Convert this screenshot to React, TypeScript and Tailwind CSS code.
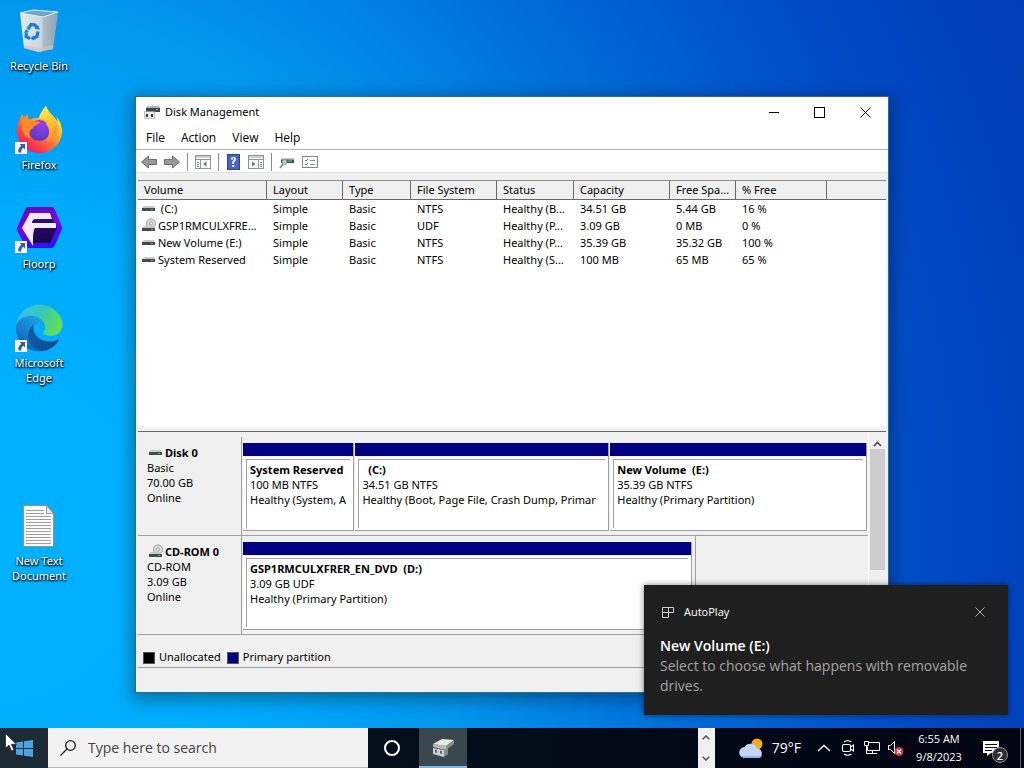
import React from 'react';

interface Volume {
    name: string;
    kind: 'disk' | 'cd';
    layout: string;
    type: string;
    fileSystem: string;
    status: string;
    capacity: string;
    free: string;
    percent: string;
}

const volumes: Volume[] = [
    { name: ' (C:)', kind: 'disk', layout: 'Simple', type: 'Basic', fileSystem: 'NTFS', status: 'Healthy (B...', capacity: '34.51 GB', free: '5.44 GB', percent: '16 %' },
    { name: 'GSP1RMCULXFRE...', kind: 'cd', layout: 'Simple', type: 'Basic', fileSystem: 'UDF', status: 'Healthy (P...', capacity: '3.09 GB', free: '0 MB', percent: '0 %' },
    { name: 'New Volume (E:)', kind: 'disk', layout: 'Simple', type: 'Basic', fileSystem: 'NTFS', status: 'Healthy (P...', capacity: '35.39 GB', free: '35.32 GB', percent: '100 %' },
    { name: 'System Reserved', kind: 'disk', layout: 'Simple', type: 'Basic', fileSystem: 'NTFS', status: 'Healthy (S...', capacity: '100 MB', free: '65 MB', percent: '65 %' },
];

const columns = [
    { label: 'Volume', width: 'w-[129px]' },
    { label: 'Layout', width: 'w-[76px]' },
    { label: 'Type', width: 'w-[68px]' },
    { label: 'File System', width: 'w-[86px]' },
    { label: 'Status', width: 'w-[77px]' },
    { label: 'Capacity', width: 'w-[96px]' },
    { label: 'Free Spa...', width: 'w-[66px]' },
    { label: '% Free', width: 'w-[91px]' },
];

/* ---------- Small drive icons ---------- */

const DriveIcon: React.FC<{ kind: 'disk' | 'cd' }> = ({ kind }) => (
    <svg width="14" height="16" viewBox="0 0 14 16" className="shrink-0">
        {kind === 'cd' && (
            <>
                <circle cx="9" cy="5.5" r="4.6" fill="#dcdcdc" stroke="#9a9a9a" strokeWidth="0.9" />
                <circle cx="9" cy="5.5" r="1.6" fill="#fff" stroke="#8a8a8a" strokeWidth="0.8" />
            </>
        )}
        <g transform={kind === 'cd' ? 'translate(0 3)' : undefined}>
            <path d="M2 5h10l1 2H0z" fill="#c9c9c9" />
            <rect x="0" y="7" width="13" height="3" fill="#454a4a" />
            <rect x="9" y="8" width="2" height="1" fill="#5fae86" />
        </g>
    </svg>
);

const AppIcon = () => (
    <svg width="16" height="16" viewBox="0 0 16 16">
        <path d="M3 2h12l1 2H2z" fill="#b4b4b4" />
        <rect x="2" y="4" width="14" height="4" fill="#3e4343" />
        <rect x="12" y="5" width="2" height="1" fill="#8fd0a8" />
        <path d="M0.500 7.500h10v7h-10z" fill="#ececec" stroke="#999" strokeWidth="0.6" />
        <path d="M2 10h2v3H2zM7 10h2v3H7z" fill="#333" />
    </svg>
);

/* ---------- Desktop shortcuts ---------- */

const RecycleBinIcon = () => (
    <svg width="48" height="48" viewBox="0 0 48 48">
        <defs>
            <linearGradient id="bin" x1="0" x2="1">
                <stop offset="0" stopColor="#dfe8ee" />
                <stop offset="0.58" stopColor="#cbd7e0" />
                <stop offset="0.6" stopColor="#b0bfca" />
                <stop offset="1" stopColor="#8aa2b4" />
            </linearGradient>
        </defs>
        <g transform="translate(-5 0)">
            <path d="M10 6 33 9 48 6 43 42 29 45 14 41z" fill="url(#bin)" />
            <path d="M10 6 23 3 48 5 33 10z" fill="#6fa6c8" stroke="#e4f0f6" strokeWidth="1" />
            <path d="M14 38l15 3v4l-15-4zM29 41l14-3v4l-14 3z" fill="#d7bfb4" opacity="0.7" />
            <g fill="none" stroke="#1c7fd0" strokeWidth="3.2">
                <path d="M18 22.500l3-5 4 .5 2 3" />
                <path d="M28 24.500l-1 5-4 2" />
                <path d="M20 31.500l-4-2 .5-4" />
            </g>
            <path d="M25 22l5 .5-2-4.500zM24 28.500v5l-4-2zM14 26l5-1-3-3z" fill="#1c7fd0" />
        </g>
    </svg>
);

const FirefoxIcon = () => (
    <svg width="48" height="48" viewBox="0 0 48 48">
        <defs>
            <linearGradient id="fxBody" x1="0.85" y1="0.1" x2="0.2" y2="0.95">
                <stop offset="0" stopColor="#fff14a" />
                <stop offset="0.3" stopColor="#ffbd2e" />
                <stop offset="0.58" stopColor="#ff7139" />
                <stop offset="0.82" stopColor="#ff3647" />
                <stop offset="1" stopColor="#e31587" />
            </linearGradient>
            <radialGradient id="fxGlobe" cx="0.6" cy="0.2" r="0.9">
                <stop offset="0" stopColor="#a03ce8" />
                <stop offset="0.6" stopColor="#6a3ed2" />
                <stop offset="1" stopColor="#4a3bb8" />
            </radialGradient>
            <linearGradient id="fxFlame" x1="0.3" y1="0" x2="0.6" y2="1">
                <stop offset="0" stopColor="#fff04c" />
                <stop offset="0.5" stopColor="#ffc42f" />
                <stop offset="1" stopColor="#ff8436" />
            </linearGradient>
        </defs>
        <path d="M31 0c-3 4-6 7-7 12-4-.5-7 .5-9 2-2-1.500-2.500-3.500-2.500-5.500-2 1-3 2.500-4 3.500 0-1.500-.5-2.500-.7-4C4.500 12 2 18 2 25c0 12 10 22 22.500 22S47 37.500 47 25c0-6-2.500-11-6-14.500 1 2 1.500 4 1.500 5.500C39.500 9.500 33 7 31 0z" fill="url(#fxBody)" />
        <circle cx="24.500" cy="24.500" r="10.500" fill="url(#fxGlobe)" />
        <path d="M31 0c-3 4-6 7-7 12 5 0 9 2 10.500 6-1.500-1-3-1-4-.5 5 5 5 13-1 17.500 9 0 14-7 13-16C39.500 9.500 33 7 31 0z" fill="url(#fxFlame)" />
        <path d="M7 13c5-1 9 0 11 2 2 .5 5 .3 7 1-1 2.500-5 3-6.500 5-.5 2-3 2-4 4.500-.5 2 0 5 1.500 7-6-1-11-8-9-19.500z" fill="#ff8b27" />
    </svg>
);

const FloorpIcon = () => (
    <svg width="48" height="48" viewBox="0 0 48 48">
        <defs>
            <linearGradient id="hexEdge" x1="0" y1="0" x2="0.3" y2="1">
                <stop offset="0" stopColor="#5a10a8" />
                <stop offset="0.5" stopColor="#7a06e0" />
                <stop offset="1" stopColor="#2f12ff" />
            </linearGradient>
            <linearGradient id="hexCore" x1="0" y1="0" x2="0" y2="1">
                <stop offset="0" stopColor="#30107a" />
                <stop offset="1" stopColor="#1a0448" />
            </linearGradient>
        </defs>
        <path d="M13 2h24q1.500 0 2.500 2l7.500 18q.5 1 0 2l-7.500 17q-1 2-3 2H13q-2 0-3-2L2 25q-.5-1 0-2L10.500 4Q11.500 2 13 2z" fill="url(#hexEdge)" />
        <path d="M15 8h20l7 15-7 15H16L8 23z" fill="url(#hexCore)" />
        <path d="M15 8h20l2 6H21c-2.500 0-4 1.500-4 4h24v5H20c-2 2-2 9-2 18L7 23z" fill="#f3e9ff" />
    </svg>
);

const EdgeIcon = () => (
    <svg width="48" height="48" viewBox="0 0 264 264">
        <defs>
            <linearGradient id="edA" x1="0.2" y1="0.5" x2="1" y2="0.7">
                <stop offset="0" stopColor="#0c59a4" />
                <stop offset="1" stopColor="#114a8b" />
            </linearGradient>
            <linearGradient id="edB" x1="0.8" y1="0.2" x2="0.3" y2="1">
                <stop offset="0" stopColor="#1b9de2" />
                <stop offset="0.5" stopColor="#1680ce" />
                <stop offset="1" stopColor="#0b5fae" />
            </linearGradient>
            <linearGradient id="edC" x1="0" y1="0.3" x2="1" y2="0.6">
                <stop offset="0" stopColor="#35c1f1" />
                <stop offset="0.5" stopColor="#36c8b8" />
                <stop offset="1" stopColor="#66e04b" />
            </linearGradient>
        </defs>
        <path fill="url(#edA)" d="M235.680 195.460a93.730 93.730 0 0 1-10.540 4.710 101.870 101.870 0 0 1-35.900 6.460c-47.320 0-88.540-32.550-88.540-74.320A31.480 31.480 0 0 1 117.130 105c-42.800 1.800-53.800 46.400-53.800 72.530 0 73.880 68.090 81.370 82.760 81.370 7.910 0 19.840-2.300 27-4.560l1.310-.44a128.340 128.340 0 0 0 66.600-52.800 4 4 0 0 0-5.320-5.640Z" />
        <path fill="url(#edB)" d="M110.340 246.340A79.200 79.200 0 0 1 87.600 225a80.720 80.720 0 0 1 29.530-120c3.120-1.470 8.450-4.130 15.540-4a32.350 32.350 0 0 1 25.690 13 31.880 31.880 0 0 1 6.360 18.660c0-.21 24.460-79.600-80-79.600-43.900 0-80 41.660-80 78.210a130.150 130.150 0 0 0 12.110 56 128 128 0 0 0 156.380 67.110 75.550 75.550 0 0 1-62.780-8Z" />
        <path fill="url(#edC)" d="M156.940 153.780c-.81 1.050-3.300 2.500-3.300 5.660 0 2.610 1.700 5.120 4.720 7.230 14.380 10 41.490 8.680 41.560 8.680a59.560 59.560 0 0 0 30.270-8.350 61.380 61.380 0 0 0 30.430-52.880c.26-22.410-8-37.310-11.340-43.910C228 29.160 182.600 4.700 133.240 4.700a128 128 0 0 0-128 126.200c.48-36.540 36.800-66.050 80-66.050 3.500 0 23.460.34 42 10.070 16.340 8.580 24.900 18.940 30.850 29.210 6.180 10.670 7.280 24.150 7.280 29.520 0 5.370-2.740 13.330-8.430 20.130Z" />
    </svg>
);

const TextFileIcon = () => (
    <svg width="48" height="48" viewBox="0 0 48 48">
        <path d="M8.500 3.500h23l7 8v33h-30z" fill="#fbfbfb" stroke="#9a8f88" strokeWidth="1" />
        <path d="M31.500 3.500v8h7z" fill="#e8e8e8" stroke="#8d8d8d" strokeWidth="0.8" />
        <path d="M11 8.500h18M11 11.500h18M11 14.500h25M11 17.500h25M11 20.500h25M11 23.500h25M11 26.500h25M11 29.500h25M11 32.500h25M11 35.500h25M11 38.500h25M11 41.500h25" stroke="#a0a0a0" strokeWidth="1" />
    </svg>
);

const ShortcutArrow = () => (
    <svg width="12" height="12" viewBox="0 0 12 12" className="absolute bottom-0 left-0">
        <rect width="12" height="12" fill="#f6f6f6" />
        <path d="M4.500 2H10v5.500L8.200 5.700C6.500 7 6 8.500 6.300 10.500H3.500C2.800 8 4 5.500 6.300 3.800z" fill="#2f5f9e" />
    </svg>
);

interface ShortcutProps {
    label: string;
    icon: React.ReactNode;
    linked?: boolean;
    className?: string;
}

const Shortcut: React.FC<ShortcutProps> = ({ label, icon, linked, className = '' }) => (
    <button className={`flex flex-col items-center gap-[3px] px-2 pt-[7px] ${className}`}>
        <span className="relative">
            {icon}
            {linked && <ShortcutArrow />}
        </span>
        <span className="text-[11px] leading-[15px] text-white [text-shadow:1px_1px_2px_#000,0_1px_2px_#000]">{label}</span>
    </button>
);

/* ---------- Toolbar ---------- */

const ArrowGlyph = ({ flip }: { flip?: boolean }) => (
    <svg width="16" height="16" viewBox="0 0 16 16" className={flip ? 'rotate-180' : ''}>
        <path d="M.5 8l7-6v3.500h8v5h-8V14z" fill="#989898" stroke="#6b6b6b" strokeWidth="1" />
    </svg>
);

const PaneGlyph = ({ right }: { right?: boolean }) => (
    <svg width="16" height="16" viewBox="0 0 16 16">
        <rect x="0.5" y="1.500" width="15" height="13" fill="#fff" stroke="#8b9399" />
        <path d="M1 2h14v2H1z" fill="#c9d1d6" />
        <path d="M1 5.500h14" stroke="#8b9399" />
        {right ? (
            <>
                <path d="M10.500 6v8" stroke="#8b9399" />
                <path d="M12 8.500h2M12 10.500h2M12 12.500h2" stroke="#6d7a82" />
                <path d="M4 7.500v5l3.500-2.500z" fill="#5b7f5f" />
            </>
        ) : (
            <>
                <path d="M5.500 6v8" stroke="#8b9399" />
                <path d="M2 8.500h2M2 10.500h2M2 12.500h2" stroke="#6d7a82" />
                <path d="M11.500 7.500v5L8 10z" fill="#5b7f5f" />
            </>
        )}
    </svg>
);

const HelpGlyph = () => (
    <span className="flex h-4 w-[13px] items-center justify-center border border-[#2f429a] bg-[#4a62c4] font-serif text-[13px] leading-none font-bold text-white">?</span>
);

const RescanGlyph = () => (
    <svg width="16" height="16" viewBox="0 0 16 16">
        <path d="M3 4h12v1.500H2z" fill="#c8c8c8" />
        <rect x="2" y="5.500" width="13" height="3.500" fill="#4c5353" />
        <path d="M9 7h4" stroke="#4fc08d" strokeWidth="1.200" />
        <circle cx="5.500" cy="8" r="2.500" fill="#a9d7cf" stroke="#7d8a8a" strokeWidth="0.8" />
        <path d="M4 10l-3 4" stroke="#8a8a8a" strokeWidth="1.800" />
    </svg>
);

const ListGlyph = () => (
    <svg width="16" height="16" viewBox="0 0 16 16">
        <rect x="0.5" y="2.500" width="15" height="11" fill="#fff" stroke="#7c8a96" />
        <path d="M3 6l1 1 2-2M3 10l1 1 2-2" stroke="#4678a8" fill="none" />
        <path d="M8 6.500h5M8 10.500h5" stroke="#8a949c" />
    </svg>
);

const ToolButton: React.FC<{ label: string; children: React.ReactNode }> = ({ label, children }) => (
    <button aria-label={label} className="flex h-5 items-center">{children}</button>
);

const Divider = () => <span className="h-[18px] w-px bg-[#8c8c8c]" />;

/* ---------- Disk graph ---------- */

interface PartitionProps {
    title: string;
    size: string;
    status: string;
    grow: string;
}

const Partition: React.FC<PartitionProps> = ({ title, size, status, grow }) => (
    <div className={`flex min-w-0 flex-col border-r border-b border-[#a0a0a0] ${grow}`}>
        <div className="h-[13px] bg-[#000080]" />
        <div className="mt-px flex-1 bg-white">
            <div className="mx-[3px] mt-[2px] h-[69px] border-t border-l border-[#a0a0a0] pr-[3px]">
                <div className="overflow-hidden pt-[2px] pl-[3px] text-[11px] leading-[15px] whitespace-pre">
                    <p className="font-bold">{title}</p>
                    <p>{size}</p>
                    <p>{status}</p>
                </div>
            </div>
        </div>
    </div>
);

interface DiskRowProps {
    name: string;
    kind: 'disk' | 'cd';
    lines: string[];
    children: React.ReactNode;
}

const DiskRow: React.FC<DiskRowProps> = ({ name, kind, lines, children }) => (
    <section className="flex h-[99px] border-b border-[#a0a0a0]">
        <div className="w-[104px] shrink-0 border-r border-[#a0a0a0] pt-2 pl-[9px] text-[11px] leading-[15px]">
            <h2 className="flex h-[15px] items-center gap-[2px] font-bold whitespace-nowrap">
                <span className="pl-[2px]"><DriveIcon kind={kind} /></span>
                {name}
            </h2>
            {lines.map((line) => <p key={line}>{line}</p>)}
        </div>
        <div className="flex min-w-0 flex-1">{children}</div>
    </section>
);

const DiskManagement = () => (
    <main className="absolute top-[97px] right-[136px] bottom-[76px] left-[136px] flex flex-col bg-white text-[11px] text-black shadow-[0_0_0_1px_#2d6a94,0_4px_16px_4px_rgba(0,0,0,0.35)]">
        <header className="flex h-[30px] items-center pl-2">
            <AppIcon />
            <h1 className="flex-1 pl-[5px]">Disk Management</h1>
            <button aria-label="Minimize" className="flex h-[30px] w-[45px] items-center justify-center">
                <span className="h-px w-[10px] bg-black" />
            </button>
            <button aria-label="Maximize" className="flex h-[30px] w-[46px] items-center justify-center">
                <span className="size-[11px] border border-black" />
            </button>
            <button aria-label="Close" className="flex h-[30px] w-[46px] items-center justify-center">
                <svg width="11" height="11" viewBox="0 0 11 11"><path d="M.5.5l10 10M10.500.5l-10 10" stroke="#000" /></svg>
            </button>
        </header>

        <nav className="flex h-[23px] items-center gap-4 border-b border-[#b4b4b4] pl-[10px] text-xs font-['Open_Sans','Noto_Sans',sans-serif]">
            <button>File</button>
            <button>Action</button>
            <button>View</button>
            <button>Help</button>
        </nav>

        <div className="flex h-[23px] items-center gap-[7px] border-b border-[#e2e2e2] pt-[2px] pl-[5px]">
            <ToolButton label="Back"><ArrowGlyph /></ToolButton>
            <ToolButton label="Forward"><ArrowGlyph flip /></ToolButton>
            <Divider />
            <ToolButton label="Show console tree"><PaneGlyph /></ToolButton>
            <Divider />
            <span className="px-px"><ToolButton label="Help"><HelpGlyph /></ToolButton></span>
            <ToolButton label="Show action pane"><PaneGlyph right /></ToolButton>
            <Divider />
            <ToolButton label="Rescan disks"><RescanGlyph /></ToolButton>
            <ToolButton label="Settings"><ListGlyph /></ToolButton>
        </div>

        <div className="flex min-h-0 flex-1 flex-col bg-[#f0f0f0] px-[2px] pt-[7px]">
            <div className="min-h-0 flex-1 border-b-4 border-[#f0f0f0] bg-white">
                <table className="w-full table-fixed border-separate border-spacing-0 text-left">
                    <thead>
                        <tr className="h-5 bg-[#f0f0f0]">
                            {columns.map((col) => (
                                <th key={col.label} className={`border-t border-r border-b border-t-[#8c8c8c] border-r-[#696969] border-b-[#696969] px-[6px] font-normal whitespace-nowrap ${col.width}`}>
                                    {col.label}
                                </th>
                            ))}
                            <th className="border-t border-b border-t-[#8c8c8c] border-b-[#696969]" />
                        </tr>
                    </thead>
                    <tbody>
                        {volumes.map((volume) => (
                            <tr key={volume.name} className="h-[17px] leading-[17px] whitespace-nowrap">
                                <td className="pl-1">
                                    <span className="flex items-center gap-[2px] whitespace-pre">
                                        <DriveIcon kind={volume.kind} />
                                        {volume.name}
                                    </span>
                                </td>
                                <td className="pl-[6px]">{volume.layout}</td>
                                <td className="pl-[6px]">{volume.type}</td>
                                <td className="pl-[6px]">{volume.fileSystem}</td>
                                <td className="pl-[6px]">{volume.status}</td>
                                <td className="pl-[6px]">{volume.capacity}</td>
                                <td className="pl-[6px]">{volume.free}</td>
                                <td className="pl-[6px]">{volume.percent}</td>
                                <td />
                            </tr>
                        ))}
                    </tbody>
                </table>
            </div>

            <div className="flex h-[217px] border-t border-[#696969]">
                <div className="flex min-w-0 flex-1 flex-col pt-[5px]">
                    <DiskRow name="Disk 0" kind="disk" lines={['Basic', '70.00 GB', 'Online']}>
                        <div className="flex min-w-0 flex-1 gap-px pt-[6px] pr-px pb-1 pl-px">
                            <Partition title="System Reserved" size="100 MB NTFS" status="Healthy (System, A" grow="flex-[111]" />
                            <Partition title="  (C:)" size="34.51 GB NTFS" status="Healthy (Boot, Page File, Crash Dump, Primar" grow="flex-[254]" />
                            <Partition title="New Volume  (E:)" size="35.39 GB NTFS" status="Healthy (Primary Partition)" grow="flex-[257]" />
                        </div>
                    </DiskRow>
                    <DiskRow name="CD-ROM 0" kind="cd" lines={['CD-ROM', '3.09 GB', 'Online']}>
                        <div className="flex min-w-0 flex-[453] border-r border-[#a0a0a0] pt-[6px] pr-[3px] pb-1 pl-px">
                            <Partition title="GSP1RMCULXFRER_EN_DVD  (D:)" size="3.09 GB UDF" status="Healthy (Primary Partition)" grow="flex-1" />
                        </div>
                        <div className="flex-[173]" />
                    </DiskRow>
                </div>
                <div className="flex w-[18px] flex-col items-center border-l border-white pt-[6px]">
                    <button aria-label="Scroll up" className="flex h-[11px] items-center">
                        <svg width="9" height="6" viewBox="0 0 9 6"><path d="M1 5l3.500-3.500L8 5" fill="none" stroke="#505050" strokeWidth="1.600" /></svg>
                    </button>
                    <div className="h-[121px] w-[15px] bg-[#cdcdcd]" />
                </div>
            </div>

            <div className="flex h-5 items-center border-b border-[#a0a0a0] pl-[5px]">
                <span className="size-3 border border-[#555] bg-black" />
                <span className="pl-1">Unallocated</span>
                <span className="ml-[6px] size-3 border border-[#555] bg-[#000080]" />
                <span className="pl-1">Primary partition</span>
            </div>
            <footer className="h-6" />
        </div>
    </main>
);

/* ---------- AutoPlay toast ---------- */

const Toast = () => (
    <aside className="absolute right-4 bottom-[53px] w-[364px] bg-[#1f1f1f] px-4 pt-[17px] pb-[19px] font-['Open_Sans','Noto_Sans',sans-serif] text-white shadow-[0_0_6px_rgba(0,0,0,0.5)]">
        <div className="flex h-5 items-center">
            <svg width="16" height="14" viewBox="0 0 16 14" fill="none" stroke="#d0d0d0">
                <path d="M2.500 2.500h11v5h-11zM8.500 2.500v10h-6V7.500" />
            </svg>
            <span className="flex-1 pl-2 text-[11px]">AutoPlay</span>
            <button aria-label="Dismiss" className="px-[7px]">
                <svg width="10" height="10" viewBox="0 0 10 10"><path d="M.5.5l9 9M9.500.5l-9 9" stroke="#a8a8a8" /></svg>
            </button>
        </div>
        <p className="pt-[14px] text-sm leading-5 font-semibold">New Volume (E:)</p>
        <p className="text-sm leading-5 text-[#a5a5a5]">Select to choose what happens with removable drives.</p>
    </aside>
);

/* ---------- Taskbar ---------- */

const Taskbar = () => (
    <footer className="flex h-10 shrink-0 bg-linear-to-r from-[#02141f] to-[#020512] font-['Open_Sans','Noto_Sans',sans-serif] text-white">
        <button aria-label="Start" className="flex w-12 items-center justify-center bg-[#1c2b34]">
            <svg width="17" height="17" viewBox="0 0 17 17" fill="#4ba3e3">
                <path d="M0 2.500l7-1v6.500H0zM8 1.300L17 0v8H8zM0 9h7v6.500l-7-1zM8 9h9v8l-9-1.300z" />
            </svg>
        </button>
        <label className="flex w-80 items-center gap-3 border-b border-[#b8b8b8] bg-[#f2f2f2] pl-3">
            <svg width="16" height="16" viewBox="0 0 16 16" fill="none" stroke="#1c1c1c" strokeWidth="1.300">
                <circle cx="10.500" cy="5.500" r="4.800" />
                <path d="M7 9l-6.500 6.500" />
            </svg>
            <input type="text" aria-label="Search" placeholder="Type here to search" className="min-w-0 flex-1 bg-transparent text-sm text-black outline-none placeholder:text-[#424242]" />
        </label>
        <button aria-label="Cortana" className="flex w-12 items-center justify-center">
            <span className="size-4 rounded-full border-2 border-white" />
        </button>
        <button aria-label="Disk Management" className="ml-[3px] flex w-12 items-center justify-center border-b-2 border-[#76b9ed] bg-[#3b474e]">
            <svg width="24" height="24" viewBox="0 0 24 24">
                <path d="M2 9l9-5 12 1-8 6z" fill="#e9e9e9" />
                <path d="M15 11l8-6v4l-8 6z" fill="#8d8d8d" />
                <path d="M2 9l13 2v4L2 12z" fill="#b9b9b9" />
                <path d="M2 13l11 2v7L2 19z" fill="#cfcfcf" />
                <path d="M13 15l4-2v6l-4 3z" fill="#8b8b8b" />
                <path d="M4 14.500l2 .5v3l-2-.5zM9 15.500l2 .5v3l-2-.5z" fill="#666" />
            </svg>
        </button>

        <div className="flex-1" />

        <div className="flex w-[17px] flex-col items-center justify-between bg-[#f0f0f0] py-[7px]">
            <button aria-label="Scroll up" className="flex"><svg width="8" height="5" viewBox="0 0 8 5"><path d="M.7 4.300L4 1l3.300 3.300" fill="none" stroke="#555" strokeWidth="1.500" /></svg></button>
            <button aria-label="Scroll down" className="flex"><svg width="8" height="5" viewBox="0 0 8 5"><path d="M.7.7L4 4 7.300.7" fill="none" stroke="#555" strokeWidth="1.500" /></svg></button>
        </div>

        <button className="flex items-center gap-2 pl-6 text-sm">
            <svg width="25" height="22" viewBox="0 0 25 22">
                <circle cx="18" cy="7" r="5.500" fill="#f7a823" />
                <path d="M6 21a5.500 5.500 0 0 1-.5-11A7 7 0 0 1 18 11.500a5 5 0 0 1 2 9.500z" fill="#c3d5f4" />
                <path d="M6 21a5.500 5.500 0 0 1-4-2h21a5 5 0 0 1-3 2z" fill="#8fb0ea" />
            </svg>
            79°F
        </button>
        <div className="flex items-center pl-4">
            <button aria-label="Show hidden icons">
                <svg width="14" height="8" viewBox="0 0 14 8"><path d="M1 7l6-5.500L13 7" fill="none" stroke="#fff" strokeWidth="1.300" /></svg>
            </button>
            <button aria-label="Meet now" className="ml-[10px]">
                <svg width="14" height="18" viewBox="0 0 14 18" fill="none" stroke="#fff" strokeWidth="1.100">
                    <rect x="1.500" y="5.500" width="8" height="7" rx="1.500" />
                    <path d="M9.500 8l3-2v6l-3-2M3 3q3.500-2.500 7.500 0M3 15q3.500 2.500 7.500 0" />
                </svg>
            </button>
            <button aria-label="Network" className="ml-2">
                <svg width="18" height="16" viewBox="0 0 18 16" fill="none" stroke="#fff">
                    <path d="M5.500 2.500h11v8h-12v-4M9.500 10.500v3M6 13.500h8M1.500 1.500h4v4h-4zM3.500 5.500v8H6" />
                </svg>
            </button>
            <button aria-label="Volume muted" className="ml-[6px]">
                <svg width="18" height="18" viewBox="0 0 18 18">
                    <path d="M1.500 6.500h2l4-4v12l-4-4h-2z" fill="none" stroke="#fff" />
                    <circle cx="12" cy="12.500" r="4.500" fill="#d23a3f" />
                    <path d="M10 10.500l4 4M14 10.500l-4 4" stroke="#fff" strokeWidth="1.200" />
                </svg>
            </button>
            <button className="ml-1 w-[60px] text-center text-[11px] leading-[18px] whitespace-nowrap">
                <span className="block">6:55 AM</span>
                <span className="block">9/8/2023</span>
            </button>
            <button aria-label="Notifications" className="relative ml-[13px] h-6 w-[26px]">
                <svg width="17" height="18" viewBox="0 0 17 18">
                    <path d="M1 2h16v12H9l-4 3v-3H1z" fill="#fff" />
                    <path d="M3 5.500h12M3 8.500h12M3 11.500h7" stroke="#0a0f18" />
                </svg>
                <span className="absolute right-0 -bottom-[3px] flex size-4 items-center justify-center rounded-full border border-[#8b8f94] bg-[#2b2f35] text-[11px] leading-none font-semibold">2</span>
            </button>
            <span className="ml-[12px] h-10 w-px bg-[#5b616c]" />
            <span className="w-[3px]" />
        </div>
    </footer>
);

const App = () => (
    <div className="relative flex h-screen flex-col overflow-hidden bg-[radial-gradient(100%_150%_at_0%_70%,#00b2ff_0%,#00abfc_28%,#0298ee_46%,#006dd8_68%,#0050ca_86%,#0043bd_100%,#003cb2_112%)] font-['Noto_Sans','Open_Sans',sans-serif]">
        <div className="grid w-[78px] flex-1 auto-rows-[99px] content-start">
            <Shortcut label="Recycle Bin" icon={<RecycleBinIcon />} />
            <Shortcut label="Firefox" icon={<FirefoxIcon />} linked />
            <Shortcut label="Floorp" icon={<FloorpIcon />} linked />
            <Shortcut label="Microsoft Edge" icon={<EdgeIcon />} linked />
            <Shortcut label="New Text Document" icon={<TextFileIcon />} className="row-start-6" />
        </div>
        <DiskManagement />
        <Taskbar />
        <Toast />
        <svg width="13" height="19" viewBox="0 0 13 19" className="absolute bottom-4 left-[5px]">
            <path d="M.5.5v15l3.500-3.300 2.500 5.800 2.500-1-2.500-5.700h5z" fill="#fff" stroke="#222" strokeWidth="0.8" />
        </svg>
    </div>
);

export default App;
